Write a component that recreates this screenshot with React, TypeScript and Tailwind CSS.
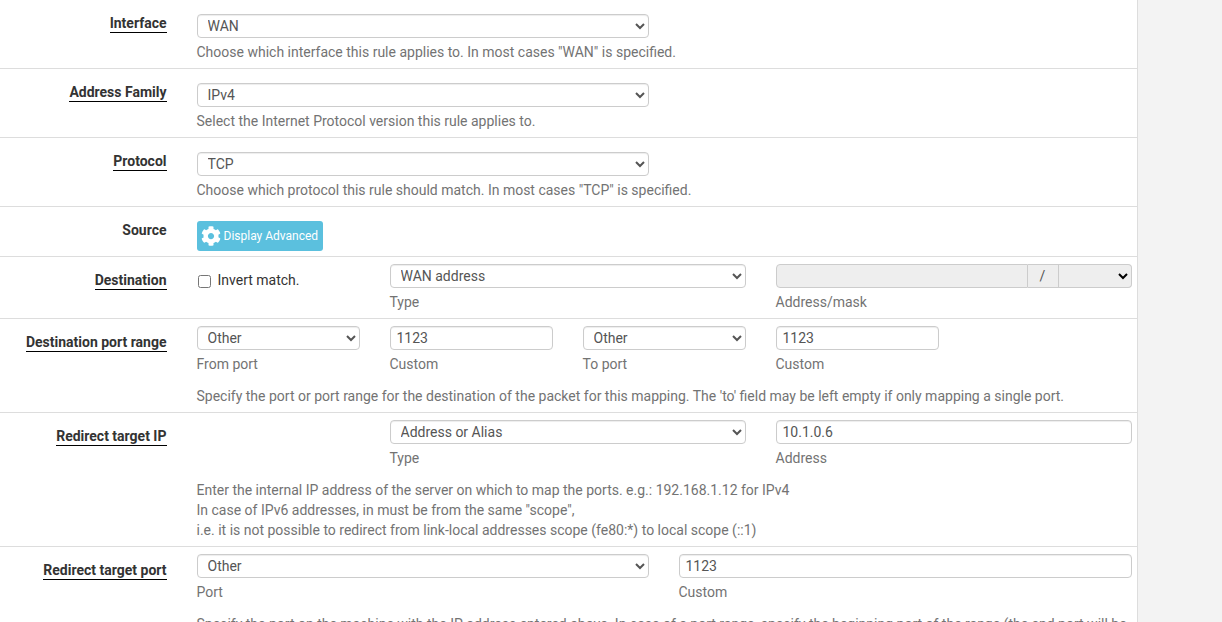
import { FaCog } from "react-icons/fa";

const control =
    "block h-6 w-full rounded border border-[#ccc] bg-white pl-[6px] text-sm text-[#555] shadow-[inset_0_1px_1px_rgba(0,0,0,0.075)]";
const textInput =
    "block h-6 w-full rounded border border-[#ccc] bg-white px-[6px] text-sm text-[#555] shadow-[inset_0_1px_1px_rgba(0,0,0,0.075)]";

function Select({ value }: { value: string }) {
    return (
        <select className={control} defaultValue={value}>
            <option>{value}</option>
        </select>
    );
}

function TextBox({ value }: { value: string }) {
    return <input className={textInput} defaultValue={value} />;
}

function Help({ children, className = "" }: { children: React.ReactNode; className?: string }) {
    return <div className={`mt-1 text-sm leading-[21px] text-[#737373] ${className}`}>{children}</div>;
}

function Row({ label, plain, pad = "pt-[14px]", children }: { label: string; plain?: boolean; pad?: string; children: React.ReactNode }) {
    return (
        <div className={`flex border-b border-[#ddd] pb-[5px] ${pad}`}>
            <div className="w-[166.5px] shrink-0 text-right">
                <Label text={label} plain={plain} pad={pad} />
            </div>
            <div className="ml-[30px] w-[935px]">{children}</div>
        </div>
    );
}

function Label({ text, plain, pad }: { text: string; plain?: boolean; pad: string }) {
    const offset = pad === "pt-[14px]" ? "-mt-[1px]" : "mt-[6px]";
    return (
        <div className={`text-sm font-bold leading-[21px] text-[#333] ${offset}`}>
            <span className={plain ? "" : "border-b border-black pb-px"}>{text}</span>
        </div>
    );
}

function Field({ width, help, children }: { width: string; help: string; children: React.ReactNode }) {
    return (
        <div className={width}>
            {children}
            <Help>{help}</Help>
        </div>
    );
}

export default function App() {
    return (
        <div className="h-[622px] overflow-hidden bg-[#f3f3f3] font-['Roboto',sans-serif]">
            <div className="w-[1138px] border-r border-[#ddd] bg-white">
                <Row label="Interface">
                    <div className="w-[452px]"><Select value="WAN" /></div>
                    <Help>Choose which interface this rule applies to. In most cases "WAN" is specified.</Help>
                </Row>
                <Row label="Address Family">
                    <div className="w-[452px]"><Select value="IPv4" /></div>
                    <Help>Select the Internet Protocol version this rule applies to.</Help>
                </Row>
                <Row label="Protocol">
                    <div className="w-[452px]"><Select value="TCP" /></div>
                    <Help>Choose which protocol this rule should match. In most cases "TCP" is specified.</Help>
                </Row>
                <Row label="Source" plain>
                    <button className="flex h-[30px] w-[126px] items-center rounded-[3px] bg-[#5bc0de] pl-[4px] text-xs text-white">
                        <FaCog className="mr-[3px] h-5 w-5" />
                        Display Advanced
                    </button>
                </Row>
                <Row label="Destination" pad="pt-[7px]">
                    <div className="flex gap-[30px]">
                        <label className="flex h-8 w-[163px] items-center text-sm leading-[21px] text-[#333]">
                            <input type="checkbox" className="ml-px mr-[7px] mt-[3px] h-[13px] w-[13px]" />
                            Invert match.
                        </label>
                        <Field width="w-[356px]" help="Type"><Select value="WAN address" /></Field>
                        <Field width="w-[356px]" help="Address/mask">
                            <div className="flex h-6">
                                <div className="w-[252px] rounded-l border border-[#ccc] bg-[#eee]" />
                                <div className="flex w-[31px] items-center justify-center border-y border-r border-[#ccc] bg-[#eee] text-sm text-[#555]">/</div>
                                <select disabled className="w-[73px] rounded-r border-y border-r border-[#ccc] bg-[#eee]" />
                            </div>
                        </Field>
                    </div>
                </Row>
                <Row label="Destination port range" pad="pt-[7px]">
                    <div className="flex gap-[30px]">
                        <Field width="w-[163px]" help="From port"><Select value="Other" /></Field>
                        <Field width="w-[163px]" help="Custom"><TextBox value="1123" /></Field>
                        <Field width="w-[163px]" help="To port"><Select value="Other" /></Field>
                        <Field width="w-[163px]" help="Custom"><TextBox value="1123" /></Field>
                    </div>
                    <Help className="mt-[11px]">
                        Specify the port or port range for the destination of the packet for this mapping. The 'to' field may be left empty if only mapping a single port.
                    </Help>
                </Row>
                <Row label="Redirect target IP" pad="pt-[7px]">
                    <div className="flex gap-[30px]">
                        <div className="w-[163px]" />
                        <Field width="w-[356px]" help="Type"><Select value="Address or Alias" /></Field>
                        <Field width="w-[356px]" help="Address"><TextBox value="10.1.0.6" /></Field>
                    </div>
                    <Help className="mb-px mt-[11px] !leading-5">
                        Enter the internal IP address of the server on which to map the ports. e.g.: 192.168.1.12 for IPv4
                        <br />
                        In case of IPv6 addresses, in must be from the same "scope",
                        <br />
                        i.e. it is not possible to redirect from link-local addresses scope (fe80:*) to local scope (::1)
                    </Help>
                </Row>
                <Row label="Redirect target port" pad="pt-[7px]">
                    <div className="flex gap-[30px]">
                        <Field width="w-[452px]" help="Port"><Select value="Other" /></Field>
                        <Field width="w-[453px]" help="Custom"><TextBox value="1123" /></Field>
                    </div>
                    <Help className="mt-[11px] whitespace-nowrap">
                        Specify the port on the machine with the IP address entered above. In case of a port range, specify the beginning port of the range (the end port will be
                    </Help>
                </Row>
            </div>
        </div>
    );
}
